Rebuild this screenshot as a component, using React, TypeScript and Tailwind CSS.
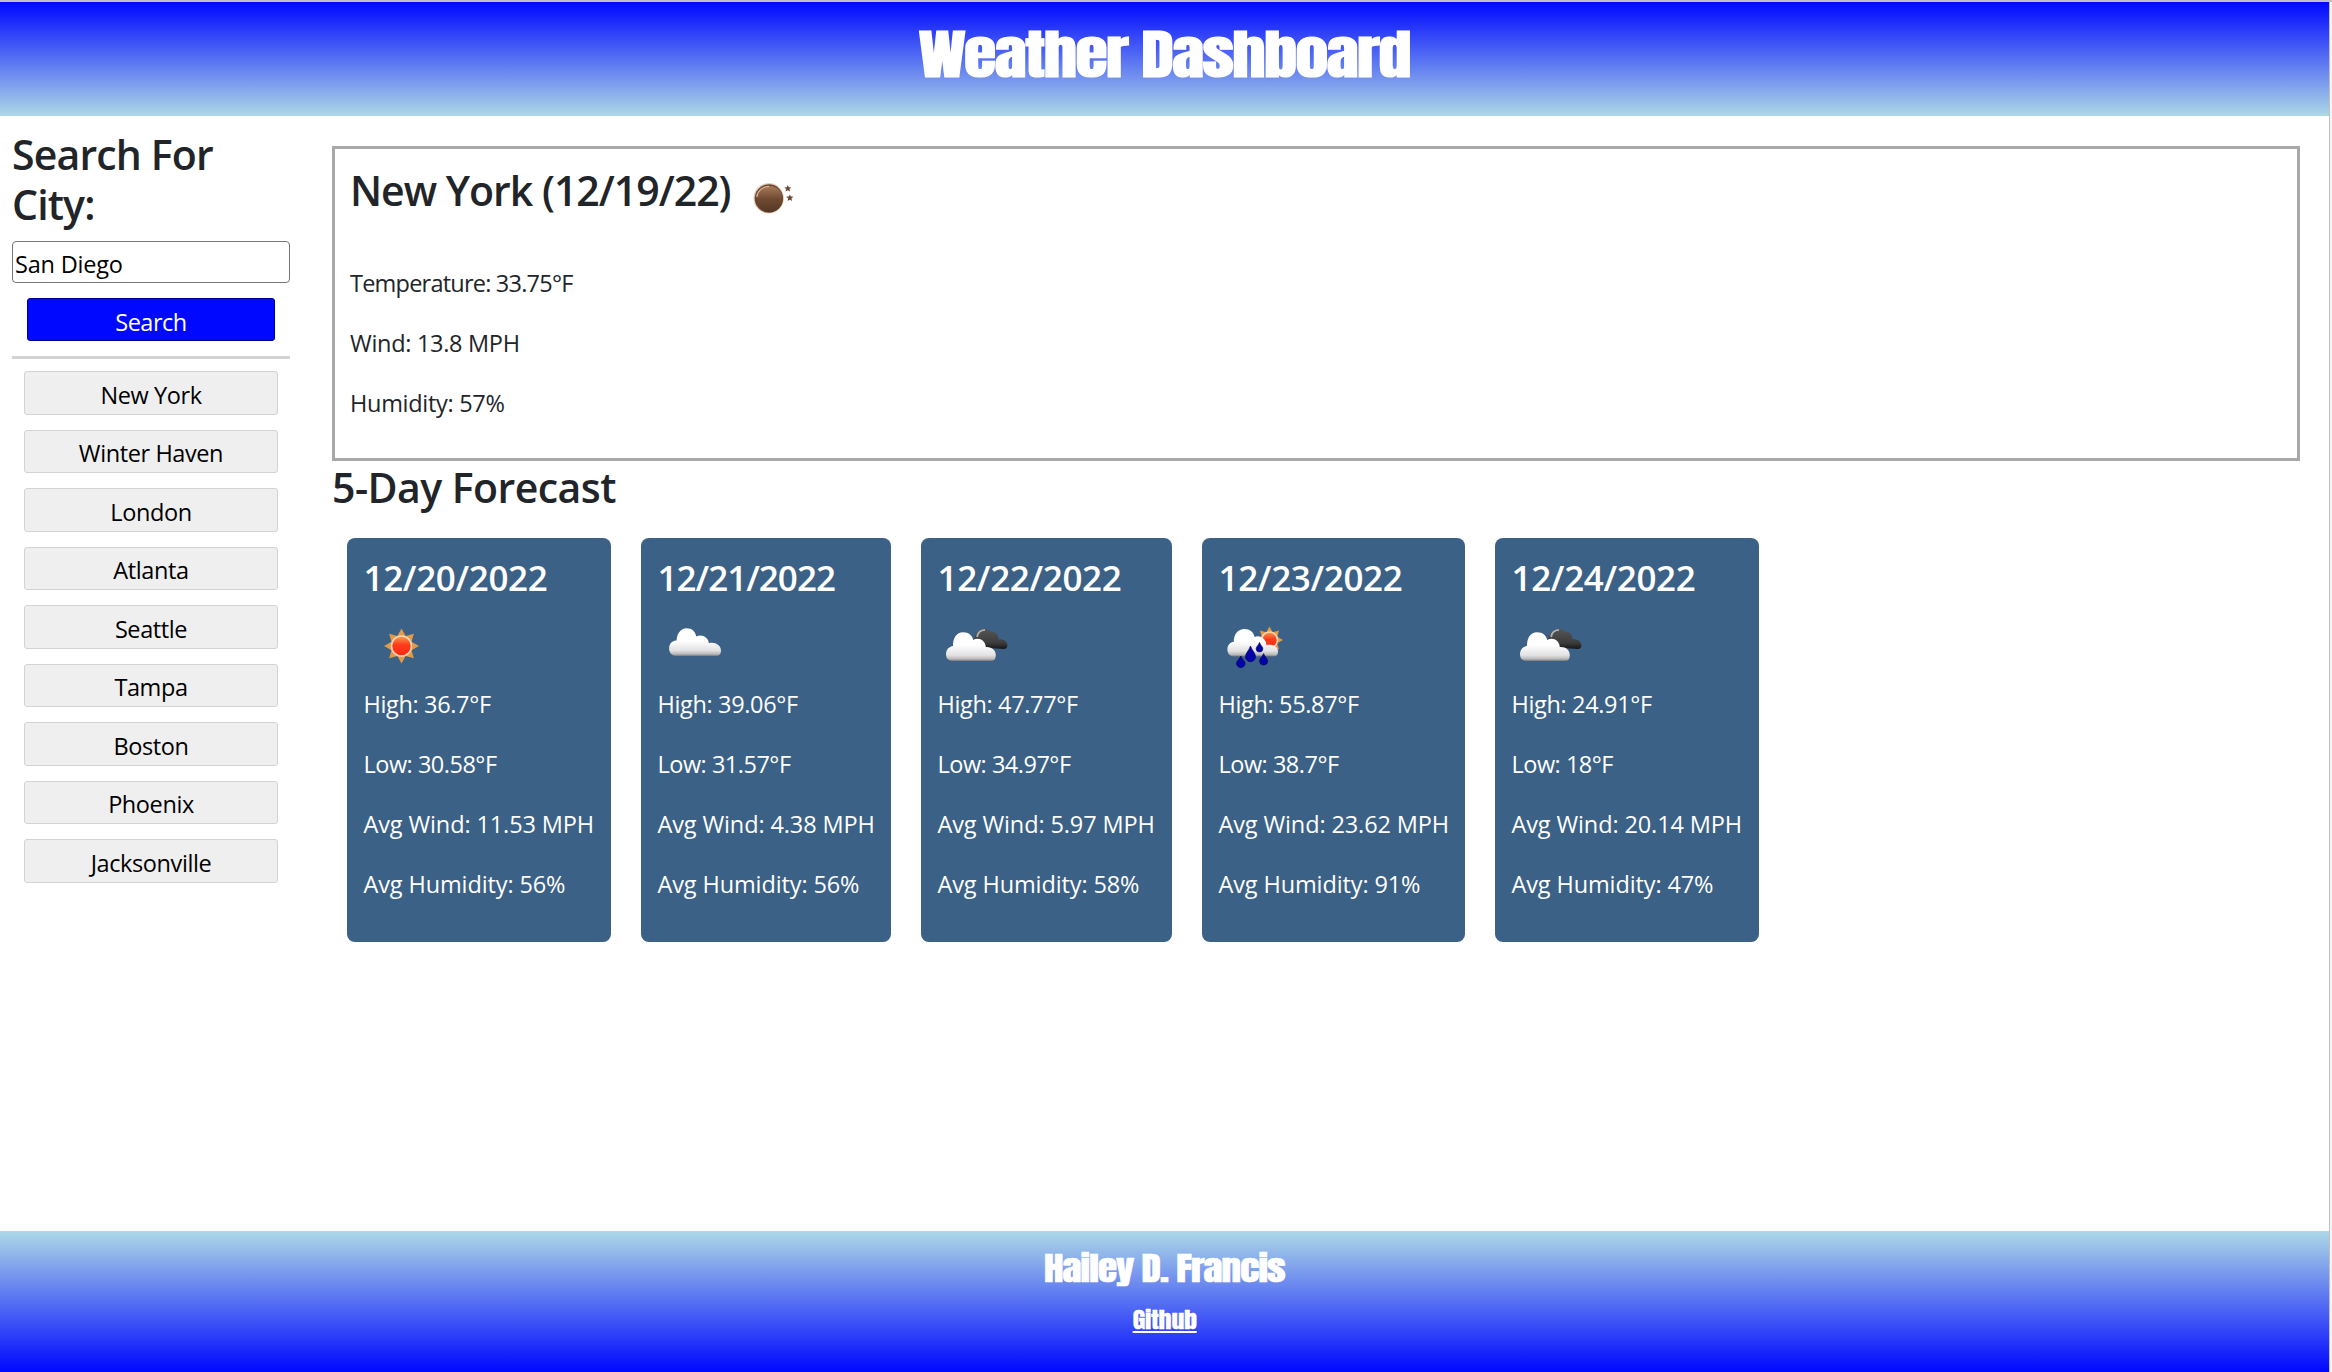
import type { ReactNode } from 'react';

type Sky = 'sun' | 'cloud' | 'broken' | 'rain';

interface Day {
  date: string;
  sky: Sky;
  high: string;
  low: string;
  wind: string;
  humidity: string;
  width: string;
  tracking: string;
}

const days: Day[] = [
  { date: '12/20/2022', sky: 'sun', high: '36.7', low: '30.58', wind: '11.53', humidity: '56', width: 'w-[264px]', tracking: 'tracking-[-0.35px]' },
  { date: '12/21/2022', sky: 'cloud', high: '39.06', low: '31.57', wind: '4.38', humidity: '56', width: 'w-[250px]', tracking: 'tracking-[-1px]' },
  { date: '12/22/2022', sky: 'broken', high: '47.77', low: '34.97', wind: '5.97', humidity: '58', width: 'w-[251px]', tracking: 'tracking-[-0.35px]' },
  { date: '12/23/2022', sky: 'rain', high: '55.87', low: '38.7', wind: '23.62', humidity: '91', width: 'w-[263px]', tracking: 'tracking-[-0.35px]' },
  { date: '12/24/2022', sky: 'broken', high: '24.91', low: '18', wind: '20.14', humidity: '47', width: 'w-[264px]', tracking: 'tracking-[-0.35px]' },
];

const cities = ['New York', 'Winter Haven', 'London', 'Atlanta', 'Seattle', 'Tampa', 'Boston', 'Phoenix', 'Jacksonville'];

function Defs() {
  return (
    <defs>
      <linearGradient id="white" x1="0" y1="0" x2="0" y2="1">
        <stop offset="0.45" stopColor="#ffffff" />
        <stop offset="0.8" stopColor="#e2e2e4" />
        <stop offset="0.93" stopColor="#b9b9b9" />
        <stop offset="1" stopColor="#77777a" />
      </linearGradient>
      <linearGradient id="dark" x1="0" y1="0" x2="0" y2="1">
        <stop offset="0" stopColor="#555555" />
        <stop offset="0.7" stopColor="#3c3c3c" />
        <stop offset="1" stopColor="#151515" />
      </linearGradient>
      <linearGradient id="core" x1="0" y1="0" x2="0" y2="1">
        <stop offset="0" stopColor="#f3a04c" />
        <stop offset="0.45" stopColor="#ff3a1c" />
        <stop offset="1" stopColor="#ff2a12" />
      </linearGradient>
      <linearGradient id="moon" x1="0" y1="0" x2="0" y2="1">
        <stop offset="0" stopColor="#a87a5a" />
        <stop offset="0.5" stopColor="#6f4a32" />
        <stop offset="1" stopColor="#543823" />
      </linearGradient>
    </defs>
  );
}

function Sun({ x, y, r, core }: { x: number; y: number; r: number; core: number }) {
  const points = Array.from({ length: 16 }, (_, i) => {
    const a = (i * Math.PI) / 8;
    const d = i % 2 ? r * 0.62 : r;
    return `${(x + d * Math.sin(a)).toFixed(2)},${(y - d * Math.cos(a)).toFixed(2)}`;
  }).join(' ');
  return (
    <g>
      <polygon points={points} fill="#e29a45" />
      <circle cx={x} cy={y} r={core} fill="url(#core)" stroke="#f7d3b0" strokeWidth="1.6" />
    </g>
  );
}

function Drop({ x, y, w, h }: { x: number; y: number; w: number; h: number }) {
  const k = w / 2;
  return (
    <path
      d={`M${x} ${y}C${x + k * 0.3} ${y + h * 0.3} ${x + k} ${y + h * 0.45} ${x + k} ${y + h - k}A${k} ${k} 0 0 1 ${x - k} ${y + h - k}C${x - k} ${y + h * 0.45} ${x - k * 0.3} ${y + h * 0.3} ${x} ${y}Z`}
      fill="#0404a8"
      stroke="#020266"
      strokeWidth="0.7"
    />
  );
}

function SkyIcon({ sky }: { sky: Sky }) {
  return (
    <svg viewBox="0 0 75 75" className="block size-[75px]">
      <Defs />
      {sky === 'sun' && <Sun x={37.5} y={37} r={17.5} core={10} />}
      {sky === 'cloud' && (
        <path
          fill="url(#white)"
          d="M17 47A7 7 0 0 1 11.2 38.5C11.5 34 15 31.6 18.6 31.6C18.8 25 22.5 19.3 28.5 19.3C34 19.3 37.6 22.8 38.2 27.6C43.5 24.6 50.5 28.3 50.8 34.2C57 32.6 62.8 36 63 41.5C63 44.5 61.5 47 59 47Z"
        />
      )}
      {sky === 'broken' && (
        <g>
          <path
            fill="url(#dark)"
            d="M36 38C35 31 37 23 43 20.4C47 19 50.5 20.5 52.2 22.6C57 22.2 60.4 25.6 60.6 30.4C65.5 30 69.6 32.6 69.4 36.6C69.2 38.8 68 40 66 40Z"
          />
          <path fill="none" stroke="#b8b0a8" strokeWidth="1.8" d="M39.2 28C39.6 23.6 42.4 21 47 20.8" />
          <path
            fill="url(#white)"
            d="M13 52A7 7 0 0 1 8 45.5C8 40.5 11 37.6 15 37C15 28.6 18.6 23.2 25 23.2C31 23.2 34.4 26.6 35.2 31C40.5 27.6 47.6 31.4 47.8 38C54 37.6 58 41.4 57.8 46.4C57.6 50 56 52 53 52Z"
          />
        </g>
      )}
      {sky === 'rain' && (
        <g>
          <Sun x={50.5} y={31} r={13.5} core={8} />
          <path
            fill="url(#white)"
            d="M14 47.5A7 7 0 0 1 8.4 40.5C8.4 36 11 33.4 14.8 32.8C14.8 25 19 20 25.4 20C31 20 34.6 23 35.6 28C41 25.6 47 29.4 47.4 36C53.6 34.6 59 37.4 59 42.4C59 46 57 47.5 54.4 47.5Z"
          />
          <Drop x={31.5} y={37} w={10} h={15.7} />
          <Drop x={40.5} y={33.5} w={6.6} h={9.5} />
          <Drop x={21.8} y={47} w={8.6} h={11.6} />
          <Drop x={44.6} y={44.6} w={8} h={11.4} />
        </g>
      )}
    </svg>
  );
}

function MoonIcon() {
  return (
    <svg viewBox="0 0 75 75" className="block size-[75px]">
      <Defs />
      <circle cx="25.7" cy="37.3" r="15.2" fill="#e3cdbb" />
      <circle cx="25.9" cy="37.5" r="14.2" fill="#6a4631" />
      <circle cx="26.7" cy="38" r="13" fill="url(#moon)" />
      <path d="M13.8 36C14.6 29.6 19.4 25.6 26 25.4" fill="none" stroke="#dcb394" strokeWidth="1.3" />
      <path
        fill="#6b4730"
        d="M44.8 24l1 2.2 2.6.2-2 1.7.7 2.5-2.3-1.3-2.3 1.3.7-2.5-2-1.7 2.6-.2zM46.8 33.4l1 2.2 2.6.2-2 1.7.7 2.5-2.3-1.3-2.3 1.3.7-2.5-2-1.7 2.6-.2z"
      />
    </svg>
  );
}

function Row({ tracking, children }: { tracking: string; children: ReactNode }) {
  return <p className={`${tracking} mb-6 leading-9 whitespace-nowrap`}>{children}</p>;
}

export default function App() {
  return (
    <div className="flex h-[1372px] w-[2332px] flex-col overflow-hidden border-t-2 border-[#c0c0c0] bg-white font-['Open_Sans','Noto_Sans',sans-serif] text-[23.5px] text-[#212529]">
      <div className="flex min-h-0 flex-1">
        <div className="flex min-w-0 flex-1 flex-col">
          <header className="flex h-[114px] shrink-0 justify-center bg-[linear-gradient(#0008ff,#add8e6)] font-[Anton,Impact,'Roboto_Condensed',sans-serif] text-white">
            <h1 className="mt-[11px] scale-x-[1.22] text-[54px] leading-[82px] font-normal tracking-[-1.25px] [-webkit-text-stroke:1.2px_white]">
              Weather Dashboard
            </h1>
          </header>

          <div className="flex flex-1">
            <aside className="ml-3 w-[278px] pt-[13px]">
              <h2 className="text-[41px] leading-[50px] font-semibold tracking-[-0.85px]">Search For City:</h2>
              <input
                type="text"
                defaultValue="San Diego"
                className="mt-3 block h-[42px] w-full rounded-[4px] border border-[#767676] bg-white px-[2px] pt-[3px] tracking-[-0.2px] text-black outline-none"
              />
              <button className="mx-auto mt-[15px] block h-[43px] w-[248px] rounded-[3px] border border-[#00008b] bg-[#0008ff] pt-[4px] leading-[36px] tracking-[-0.5px] text-white">
                Search
              </button>
              <hr className="mt-[15px] h-[3px] border-0 bg-[#d3d3d3]" />
              <div className="mt-3 flex flex-col items-center gap-[15px]">
                {cities.map((city) => (
                  <button key={city} className="h-[43.5px] w-[254px] rounded-[3px] border border-[#d3d3d3] bg-[#efefef] pt-[4px] leading-[36px] tracking-[-0.4px] text-black">
                    {city}
                  </button>
                ))}
              </div>
            </aside>

            <main className="mt-[30px] ml-[42px] w-[1968px]">
              <section className="h-[315px] border-[3px] border-[#a9a9a9] px-[15px] pt-[12px]">
                <div className="flex h-[104px]">
                  <h2 className="mt-[4px] w-[393px] shrink-0 text-[41px] leading-[50px] font-semibold tracking-[-1px] whitespace-nowrap">New York (12/19/22)</h2>
                  <MoonIcon />
                </div>
                <Row tracking="tracking-[-0.78px]">Temperature: 33.75°F</Row>
                <Row tracking="tracking-[-0.3px]">Wind: 13.8 MPH</Row>
                <Row tracking="tracking-[-0.3px]">Humidity: 57%</Row>
              </section>
              <h2 className="h-[77px] pt-px text-[41px] leading-[50px] font-semibold tracking-[-0.55px]">5-Day Forecast</h2>
              <div className="ml-[15px] flex gap-[30px]">
                {days.map((day) => (
                  <article key={day.date} className={`${day.width} h-[404px] rounded-lg bg-[#3b6186] px-[16.5px] pt-[18px] text-white`}>
                    <h3 className={`${day.tracking} text-[35px] leading-[43px] font-semibold`}>{day.date}</h3>
                    <div className="h-[87px] pt-[10px]">
                      <SkyIcon sky={day.sky} />
                    </div>
                    <Row tracking="tracking-[-0.35px]">High: {day.high}°F</Row>
                    <Row tracking="tracking-[-0.5px]">Low: {day.low}°F</Row>
                    <Row tracking="tracking-[-0.12px]">Avg Wind: {day.wind} MPH</Row>
                    <Row tracking="tracking-[-0.12px]">Avg Humidity: {day.humidity}%</Row>
                  </article>
                ))}
              </div>
            </main>
          </div>

          <footer className="flex h-[141px] shrink-0 flex-col items-center bg-[linear-gradient(#add8e6,#0008ff)] font-[Anton,Impact,'Roboto_Condensed',sans-serif] text-white">
            <h2 className="mt-[13px] scale-x-[1.2] text-[32.5px] leading-[50px] font-normal tracking-[-0.72px] [-webkit-text-stroke:0.7px_white]">
              Hailey D. Francis
            </h2>
            <a
              href="#"
              className="mt-[8px] scale-x-[1.2] text-[21.5px] leading-[36px] tracking-[-0.2px] underline decoration-2 underline-offset-2 [-webkit-text-stroke:0.3px_white]"
            >
              Github
            </a>
          </footer>
        </div>
        <div className="w-[3px] shrink-0 border-l border-[#c0c0c0] bg-[#f5f5f5]" />
      </div>
    </div>
  );
}
